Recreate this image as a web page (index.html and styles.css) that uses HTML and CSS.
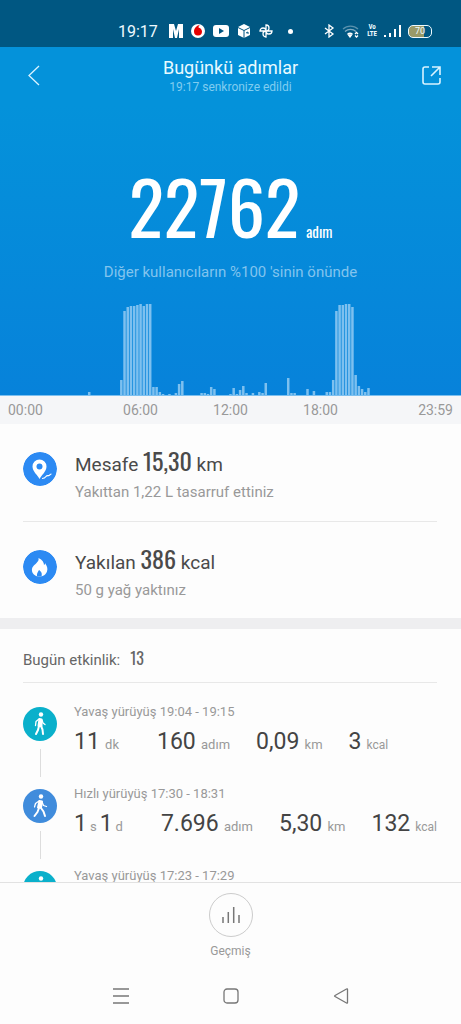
FILE: index.html
```html
<!DOCTYPE html>
<html lang="tr">
<head>
<meta charset="utf-8">
<meta name="viewport" content="width=device-width, initial-scale=1">
<title>Bugünkü adımlar</title>
<link rel="stylesheet" href="styles.css">
</head>
<body>
<div class="status">
  <span class="clock">19:17</span>
  <div class="status-icons">
    <svg width="14" height="14" viewBox="0 0 14 14" fill="#fff"><path d="M0 0h5l2 7 2-7h5v14h-4V5l-2 9H6L4 5v9H0z"/></svg>
    <svg width="14" height="14" viewBox="0 0 14 14"><circle cx="7" cy="7" r="7" fill="#fff"/><path d="M9 1C6 1 3 4 3 7.500a4 4 0 0 0 8 0C11 5 9 4 7.500 3.500 7.500 2.500 8 1.500 9 1z" fill="#e60000"/></svg>
    <svg width="16" height="12" viewBox="0 0 16 12"><rect width="16" height="12" rx="3" fill="#fff"/><path d="M6 3l5 3-5 3z" fill="#005580"/></svg>
    <svg width="14" height="14" viewBox="0 0 14 14"><path d="M7 0l6 3v8l-6 3-6-3V3z" fill="#fff"/><path d="M1 3.500l6 3 6-3M7 6.500V14M9 9l2-1v2" fill="none" stroke="#005580"/></svg>
    <svg width="14" height="14" viewBox="0 0 14 14" fill="none" stroke="#fff" stroke-width="1.300"><path d="M7 7V1a3 3 0 0 1 0 6h6a3 3 0 0 1-6 0v6a3 3 0 0 1 0-6H1a3 3 0 0 1 6 0z"/></svg>
  </div>
  <span class="dot"></span>
  <div class="status-system">
    <svg width="11" height="14" viewBox="0 0 11 14" fill="none" stroke="#fff" stroke-width="1.300"><path d="M1 4l8 6-4 3V1l4 3-8 6"/></svg>
    <svg width="18" height="14" viewBox="0 0 18 14" fill="none" stroke="#fff" stroke-width="1.300"><path d="M1 5a11 11 0 0 1 15 0" opacity=".35"/><path d="M3 7.500a8 8 0 0 1 11 0" opacity=".5"/><path d="M5.500 10a5 5 0 0 1 5 0"/><path d="M6.500 11h3L8 13z" fill="#fff"/><path d="M13 10l1.500-1.500L16 10M13 11.500l1.500 1.500 1.500-1.500"/></svg>
    <span class="volte"><span>Vo</span><span>LTE</span></span>
    <svg width="17" height="14" viewBox="0 0 17 14" fill="#fff"><path d="M0 11h2v2H0zM5 9h2v4H5zM10 5h2v8h-2zM15 1h2v12h-2z"/></svg>
    <span class="battery">70</span>
  </div>
</div>
<header class="topbar">
  <button class="icon-button" aria-label="Geri"><svg width="24" height="24" viewBox="0 0 24 24" fill="none" stroke="#d9f3ff" stroke-width="1.300"><path d="M21 2L11 11.500 21 21"/></svg></button>
  <div class="heading">
    <h1>Bugünkü adımlar</h1>
    <p>19:17 senkronize edildi</p>
  </div>
  <button class="icon-button" aria-label="Paylaş"><svg width="24" height="24" viewBox="0 0 24 24" fill="none" stroke="#d9f3ff" stroke-width="1.600"><path d="M10 3H6a2 2 0 0 0-2 2v13a2 2 0 0 0 2 2h13a2 2 0 0 0 2-2v-4M13 3h8v8M21 3l-9 9"/></svg></button>
</header>
<section class="hero">
  <p class="total"><strong>22762</strong><span>adım</span></p>
  <p class="rank">Diğer kullanıcıların %100 'sinin önünde</p>
  <svg class="chart" id="chart" viewBox="0 0 461 92" preserveAspectRatio="none" role="img" aria-label="Saatlik adımlar"></svg>
</section>
<div class="axis"><span>00:00</span><span>06:00</span><span>12:00</span><span>18:00</span><span>23:59</span></div>
<main class="content">
  <section class="metrics">
    <div class="metric">
      <svg class="badge" viewBox="0 0 34 34"><circle cx="17" cy="17" r="17" fill="#2c8af3"/><path d="M16.500 27c-2-4-7-7.500-7-12.500a7 7 0 0 1 14 0c0 5-5 8.500-7 12.500z" fill="#fff"/><circle cx="16.500" cy="14.500" r="3" fill="#2c8af3"/><path d="M19 26.500c2 0 3-.5 4-2s2-.5 3-1 1-1.500 2.500-1.500" fill="none" stroke="#fff" stroke-width="1.200"/></svg>
      <div>
        <h2>Mesafe <strong>15,30</strong> km</h2>
        <p>Yakıttan 1,22 L tasarruf ettiniz</p>
      </div>
    </div>
    <div class="metric">
      <svg class="badge" viewBox="0 0 34 34"><circle cx="17" cy="17" r="17" fill="#2c8af3"/><path d="M15.500 8c4 2 5.500 4.500 5.500 7 1-.5 1-1 1-2 2 3 3 5.500 2 8.500-1 3-4 5-7.500 5s-7-2-7.500-5.500c-.5-4 2-5.500 4.500-8 1.500-1.500 2.500-3 2-5z" fill="#fff"/><path d="M16 20c2 1.500 3.500 3 2.500 6.500h-4.500c-.500-3 .5-3.500 2-6.500z" fill="#2c8af3"/></svg>
      <div>
        <h2>Yakılan <strong>386</strong> kcal</h2>
        <p>50 g yağ yaktınız</p>
      </div>
    </div>
  </section>
  <section class="activities">
    <h3>Bugün etkinlik: <strong>13</strong></h3>
    <ul>
      <li>
        <div class="track"><svg class="badge slow" viewBox="0 0 34 34"><use href="#walker"/></svg></div>
        <div class="entry">
          <p>Yavaş yürüyüş 19:04 - 19:15</p>
          <div class="stats"><span><b>11</b> dk</span><span><b>160</b> adım</span><span><b>0,09</b> km</span><span><b>3</b> kcal</span></div>
        </div>
      </li>
      <li>
        <div class="track"><svg class="badge fast" viewBox="0 0 34 34"><use href="#strider"/></svg></div>
        <div class="entry">
          <p>Hızlı yürüyüş 17:30 - 18:31</p>
          <div class="stats"><span class="tight"><b>1</b> s <b>1</b> d</span><span><b>7.696</b> adım</span><span><b>5,30</b> km</span><span><b>132</b> kcal</span></div>
        </div>
      </li>
      <li>
        <div class="track"><svg class="badge slow" viewBox="0 0 34 34"><use href="#walker"/></svg></div>
        <div class="entry">
          <p>Yavaş yürüyüş 17:23 - 17:29</p>
        </div>
      </li>
    </ul>
  </section>
</main>
<footer class="history">
  <button><span class="ring"><svg width="20" height="20" viewBox="0 0 20 20" stroke="#777" stroke-width="1.500"><path d="M2 12v6M7.300 7v11M12.700 2v16M18 10v8"/></svg></span>Geçmiş</button>
</footer>
<nav class="system-nav">
  <button aria-label="Son uygulamalar"><svg width="18" height="18" viewBox="0 0 18 18" stroke="#777" stroke-width="1.300"><path d="M1 2h16M1 9h16M1 16h16"/></svg></button>
  <button aria-label="Ana ekran"><svg width="18" height="18" viewBox="0 0 18 18" fill="none" stroke="#777" stroke-width="1.300"><rect x="2" y="2" width="14" height="14" rx="3"/></svg></button>
  <button aria-label="Geri"><svg width="18" height="18" viewBox="0 0 18 18" fill="none" stroke="#777" stroke-width="1.300" stroke-linejoin="round"><path d="M15.500 2.500v13q0 1-1 .5L3 9.500q-1-.5 0-1L14.500 2q1-.5 1 .5z"/></svg></button>
</nav>
<svg class="defs" width="0" height="0">
  <defs>
    <g id="walker" fill="#fff" stroke="#fff" stroke-linecap="round" stroke-linejoin="round"><circle cx="18" cy="7.500" r="2.200" stroke="none"/><path d="M16.500 12l-1 7 3 0 0-6.500z" stroke-width="2"/><path d="M16 12l-3 2.500-.5 4M19 13l1 3 2 1.500" fill="none" stroke-width="1.300"/><path d="M16 19l-1 4-2 4M18 19l1.500 3.500.5 4.500" fill="none" stroke-width="2"/></g>
    <g id="strider" fill="#fff" stroke="#fff" stroke-linecap="round" stroke-linejoin="round"><circle cx="18" cy="7.500" r="2.200" stroke="none"/><path d="M16.500 12l-1.500 6.500 3 0 1-6z" stroke-width="2"/><path d="M16 12l-3.500 2.500-1 3.500M19 13l1.500 3.500 3 1" fill="none" stroke-width="1.300"/><path d="M16 19l-1.500 4-3 4M18 19l2.500 3.500 1.500 4.500" fill="none" stroke-width="2"/></g>
  </defs>
</svg>
<script src="chart.js"></script>
</body>
</html>
```

FILE: styles.css
```css
* { box-sizing: border-box; margin: 0; padding: 0; }
body {
  display: flex;
  flex-direction: column;
  height: 100vh;
  background: #fdfdfd;
  color: #4a4a4a;
  font-family: Roboto, "Noto Sans", sans-serif;
  font-size: 14px;
}
button { border: 0; background: none; font: inherit; color: inherit; }
svg { display: block; }
.defs { position: absolute; }
.status {
  display: flex;
  align-items: center;
  flex-shrink: 0;
  height: 47px;
  padding: 15px 29px 0 118px;
  background: #005782;
  color: #eefaff;
}
.clock { font-size: 16px; }
.status-icons { display: flex; align-items: center; gap: 8px; margin-left: 11px; }
.dot { width: 5px; height: 5px; margin-left: 15px; border-radius: 50%; background: #fff; }
.status-system { display: flex; align-items: center; gap: 7px; margin-left: auto; }
.volte { display: grid; font-family: "Roboto Condensed", Roboto, sans-serif; font-size: 7px; font-weight: 700; line-height: 7px; text-align: center; }
.battery {
  width: 24px;
  border: 1px solid #eefaff;
  border-radius: 5px;
  background: linear-gradient(90deg, #9a9a68 70%, #005782 70%);
  font-size: 9px;
  line-height: 11px;
  text-align: center;
}
.topbar {
  display: flex;
  align-items: center;
  justify-content: space-between;
  flex-shrink: 0;
  height: 58px;
  padding: 0 18px;
  background: #0492da;
}
.icon-button { display: grid; place-items: center; width: 24px; height: 24px; }
.heading { text-align: center; }
.heading h1 { color: #e8faff; font-size: 18px; font-weight: 400; line-height: 22px; }
.heading p { color: #80cdf0; font-size: 12px; line-height: 16px; }
.hero {
  display: flex;
  flex-direction: column;
  flex-shrink: 0;
  padding-top: 58px;
  background: linear-gradient(#0492da, #0782da);
  text-align: center;
}
.total {
  display: flex;
  align-items: baseline;
  justify-content: center;
  gap: 6px;
  height: 92px;
  color: #fff;
  line-height: 84px;
}
.total strong, .total span, .metric strong, .activities h3 strong {
  font-family: Oswald, "Roboto Condensed", "Liberation Sans Narrow", Roboto, sans-serif;
}
.total strong { font-size: 74px; font-weight: 400; }
.total span { font-size: 15px; }
.rank { margin: 7px 0 22px; color: #82c4ee; font-size: 15px; line-height: 20px; }
.chart { width: 100%; height: 92px; fill: #7dc0ef; }
.axis {
  display: grid;
  grid-template-columns: 35fr 36fr 36fr 36fr 35fr;
  flex-shrink: 0;
  padding: 0 8px;
  background: #f5f6f8;
  color: #999;
  line-height: 28px;
  text-align: center;
}
.axis span:first-child { text-align: left; }
.axis span:last-child { text-align: right; }
.content { flex: 1; min-height: 0; overflow-y: auto; scrollbar-width: none; }
.metrics { padding: 0 24px 0 23px; border-bottom: 11px solid #eeeef0; }
.metric { display: flex; gap: 18px; height: 97px; padding-top: 24px; }
.metric + .metric { border-top: 1px solid #e8e8e8; }
.badge { width: 34px; height: 34px; flex-shrink: 0; border-radius: 50%; }
.metric .badge { margin-top: 4px; }
.metric h2 { font-size: 19px; font-weight: 400; line-height: 32px; }
.metric strong { font-size: 24px; font-weight: 400; line-height: 24px; }
.metric p { color: #999; font-size: 15px; line-height: 22px; }
.activities { padding: 0 24px 0 23px; }
.activities h3 {
  display: flex;
  align-items: baseline;
  gap: 10px;
  height: 54px;
  border-bottom: 1px solid #e8e8e8;
  color: #666;
  font-size: 15px;
  font-weight: 400;
  line-height: 62px;
}
.activities h3 strong { font-size: 16px; font-weight: 400; line-height: 20px; }
.activities ul { padding-top: 20px; list-style: none; }
.activities li { display: flex; gap: 17px; height: 82px; }
.track { display: flex; flex-direction: column; gap: 8px; align-items: center; padding: 4px 0; }
.track::after { content: ""; flex: 1; width: 1px; margin-bottom: 4px; background: #ddd; }
.slow { background: #0ab0cb; }
.fast { background: #408cdc; }
.entry { flex: 1; color: #999; font-size: 13px; line-height: 18px; }
.stats { display: flex; gap: 26px; margin-top: 5px; line-height: 32px; white-space: nowrap; }
.stats span:first-child { margin-right: 12px; }
.stats span:last-child { font-size: 12px; }
.stats b { margin-right: 2px; color: #444; font-size: 23px; font-weight: 400; }
.stats .tight { display: flex; align-items: baseline; gap: 3px; }
.stats .tight b { margin: 0; }
.history {
  display: flex;
  justify-content: center;
  flex-shrink: 0;
  padding: 10px 0 8px;
  border-top: 1px solid #e2e2e2;
}
.history button { display: grid; justify-items: center; gap: 5px; color: #999; font-size: 12px; line-height: 18px; }
.ring { display: grid; place-items: center; width: 44px; height: 44px; border: 1px solid #ccc; border-radius: 50%; }
.system-nav { display: flex; justify-content: center; gap: 92px; flex-shrink: 0; padding: 19px 0; }
```

FILE: chart.js
```js
// Steps per ten-minute slot: first slot index -> consecutive bar heights.
const runs = {
  27: [4],
  36: [1, 16, 85, 89, 90, 90, 91, 92, 90, 92, 92, 9, 9, 4, 2],
  52: [2, 1, 3, 12, 15],
  62: [3, 3, 2, 9, 7],
  71: [2, 8, 2, 6, 10, 3, 1, 3, 0, 4, 3, 13],
  89: [18, 3, 3, 1],
  95: [7],
  97: [5],
  101: [4, 4, 16, 85, 91, 91, 92, 92, 89, 21, 10, 7, 4, 8]
};
const chart = document.getElementById("chart");
const addBar = (x, y, width, height) => {
  const bar = document.createElementNS("http://www.w3.org/2000/svg", "rect");
  Object.entries({ x, y, width, height }).forEach(([key, value]) => bar.setAttribute(key, value));
  chart.append(bar);
};
for (const [start, heights] of Object.entries(runs)) {
  heights.forEach((height, i) => addBar((Number(start) + i) * 3.21 + 1.3, 92 - height, 2.5, height));
}
addBar(0, 91, 461, 1);
```
